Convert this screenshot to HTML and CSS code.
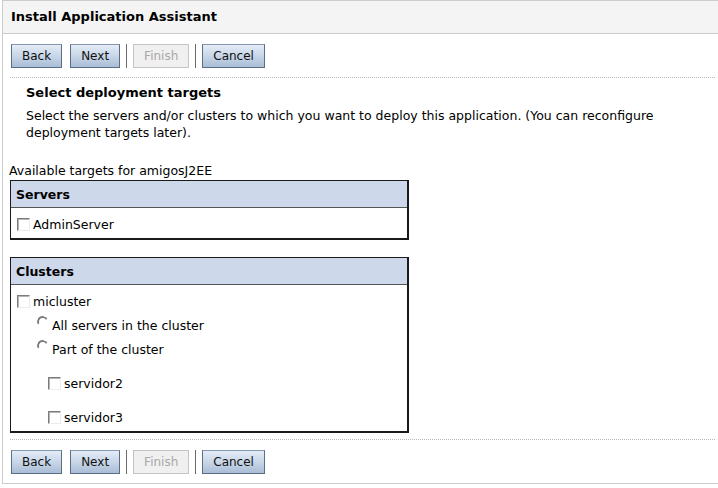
FILE: index.html
```html
<!DOCTYPE html>
<html>
<head>
<meta charset="utf-8">
<link rel="stylesheet" href="styles.css">
</head>
<body>
<div class="frame">
  <div class="titlebar">Install Application Assistant</div>
  <div class="btnbar top">
    <button class="btn">Back</button>
    <button class="btn">Next</button>
    <span class="sep"></span>
    <button class="btn disabled">Finish</button>
    <span class="sep"></span>
    <button class="btn">Cancel</button>
  </div>
  <div class="intro">
    <div class="heading">Select deployment targets</div>
    <p class="desc">Select the servers and/or clusters to which you want to deploy this application. (You can reconfigure deployment targets later).</p>
  </div>
  <div class="avail">Available targets for amigosJ2EE</div>
  <div class="tbl servers">
    <div class="thead">Servers</div>
    <div class="tbody">
      <label class="row"><span class="cb"></span>AdminServer</label>
    </div>
  </div>
  <div class="tbl clusters">
    <div class="thead">Clusters</div>
    <div class="tbody">
      <label class="row"><span class="cb"></span>micluster</label>
      <label class="row lvl1"><span class="rb"></span>All servers in the cluster</label>
      <label class="row lvl1"><span class="rb"></span>Part of the cluster</label>
      <label class="row lvl2 srv"><span class="cb"></span>servidor2</label>
      <label class="row lvl2 srv"><span class="cb"></span>servidor3</label>
    </div>
  </div>
  <div class="btnbar bottom">
    <button class="btn">Back</button>
    <button class="btn">Next</button>
    <span class="sep"></span>
    <button class="btn disabled">Finish</button>
    <span class="sep"></span>
    <button class="btn">Cancel</button>
  </div>
</div>
</body>
</html>
```
FILE: styles.css
```css
html, body {
  margin: 0;
  padding: 0;
  background: #fff;
  font-family: "DejaVu Sans", "Liberation Sans", sans-serif;
  font-size: 12.5px;
  color: #000;
}
.frame {
  margin-left: 2px;
  border-left: 1px solid #cccccc;
  border-top: 1px solid #cccccc;
  border-bottom: 1px solid #cccccc;
  height: 484px;
  box-sizing: border-box;
}
.titlebar {
  height: 33px;
  box-sizing: border-box;
  background: #f4f4f4;
  border-bottom: 1px solid #cccccc;
  font-weight: bold;
  font-size: 13px;
  padding: 8px 0 0 8px;
}
.btnbar {
  display: flex;
  align-items: center;
  margin: 0 3px 0 7px;
  padding: 10px 0 9px 1px;
}
.btnbar.top {
  border-bottom: 1px dotted #b8b8b8;
}
.btnbar.bottom {
  border-top: 1px dotted #b8b8b8;
  margin-top: 6px;
  padding-top: 10px;
}
.btn {
  height: 24px;
  box-sizing: border-box;
  font-family: "DejaVu Sans", sans-serif;
  font-size: 12px;
  color: #111;
  border: 1px solid #5a6e88;
  border-top-color: #8598b0;
  background: linear-gradient(#e4ecf6, #c8d6e8 50%, #a9bdd6);
  padding: 0 10px;
  margin-right: 8px;
}
.btn.disabled {
  color: #a8a8a8;
  border: 1px solid #c4c4c4;
  background: #f0f0f0;
}
.sep {
  width: 1px;
  height: 24px;
  background: #6a6a6a;
  margin: 0 6px 0 -2px;
}
.intro {
  padding: 7px 0 0 23px;
}
.heading {
  font-weight: bold;
  font-size: 13px;
  line-height: 16px;
}
.desc {
  margin: 6px 0 0;
  line-height: 17px;
  padding-right: 10px;
}
.avail {
  margin-top: 22px;
  margin-left: 6px;
  line-height: 16px;
}
.tbl {
  margin-left: 7px;
  width: 399px;
  box-sizing: border-box;
  border: 2px solid #1a1a1a;
  border-top-width: 1px;
  border-left-width: 1px;
}
.servers {
  margin-top: 1px;
}
.clusters {
  margin-top: 17px;
}
.thead {
  background: #cdd9ea;
  border-bottom: 1px solid #555;
  font-weight: bold;
  height: 27px;
  box-sizing: border-box;
  padding: 6px 0 0 5px;
}
.tbody {
  padding: 7px 0 5px 6px;
}
.servers .tbody {
  padding: 7px 0 5px 6px;
}
.row {
  display: flex;
  align-items: center;
  height: 18px;
}
.clusters .tbody .row + .row {
  margin-top: 6px;
}
.clusters .tbody .srv {
  margin-top: 16px !important;
}
.lvl1 {
  padding-left: 20px;
}
.lvl2 {
  padding-left: 31px;
}
.cb {
  display: inline-block;
  width: 13px;
  height: 13px;
  box-sizing: border-box;
  border: 1px solid;
  border-color: #7c7c7c #ececec #ececec #7c7c7c;
  box-shadow: inset 1px 1px 0 #b4b4b4;
  margin-right: 3px;
}
.rb {
  display: inline-block;
  width: 11px;
  height: 11px;
  box-sizing: border-box;
  border-radius: 50%;
  border: 2px solid;
  border-color: #7a7a7a transparent transparent #7a7a7a;
  transform: rotate(15deg);
  margin: 0 4px 8px 0;
}
```
